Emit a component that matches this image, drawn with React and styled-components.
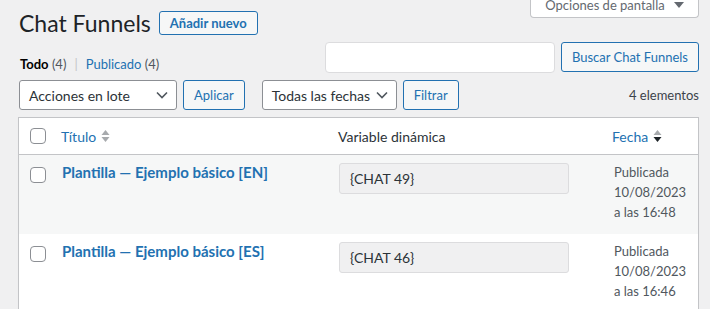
import React from "react"
import styled, { createGlobalStyle } from "styled-components"

const GlobalStyle = createGlobalStyle`
  html, body {
    margin: 0;
    padding: 0;
    background: #f0f0f1;
  }
  body {
    font-family: Lato, "Noto Sans", sans-serif;
    font-size: 13px;
    color: #3c434a;
  }
  * {
    box-sizing: border-box;
  }
`

const Wrap = styled.div`
  padding: 0 11px 0 19px;
  height: 309px;
  overflow: hidden;
`

const TopRow = styled.div`
  display: flex;
  justify-content: space-between;
  align-items: flex-start;
`

const Heading = styled.div`
  display: flex;
  align-items: center;
  gap: 8px;
  margin-top: 8px;
`

const Title = styled.h1`
  margin: 0;
  font-size: 23px;
  font-weight: 400;
  line-height: 30px;
  color: #1d2327;
`

const Button = styled.button`
  height: ${({ small }) => (small ? 24 : 30)}px;
  padding: 0 10px;
  border: 1px solid #2271b1;
  border-radius: 3px;
  background: #f6f7f7;
  color: #2271b1;
  font-family: inherit;
  font-size: 13px;
  font-weight: ${({ small }) => (small ? 700 : 400)};
  white-space: nowrap;
  cursor: pointer;
`

const ScreenOptions = styled.button`
  display: flex;
  align-items: center;
  justify-content: center;
  gap: 9px;
  margin-top: -8px;
  height: 26px;
  width: 169px;
  padding: 0 10px;
  border: 1px solid #c3c4c7;
  border-top: none;
  border-radius: 0 0 4px 4px;
  background: #fff;
  color: #646970;
  font-family: inherit;
  font-size: 13px;
  white-space: nowrap;
`

const FilterRow = styled.div`
  display: flex;
  justify-content: space-between;
  align-items: flex-end;
  margin-top: 4px;
`

const Views = styled.div`
  display: flex;
  align-items: center;
  gap: 6px;
  padding-left: 1px;
  margin-bottom: 1px;
  font-size: 13px;
  color: #50575e;
`

const Current = styled.span`
  color: #000;
  font-weight: 700;
`

const ViewLink = styled.span`
  color: #2271b1;
`

const Sep = styled.span`
  color: #c3c4c7;
  margin: 0 2px;
`

const SearchBox = styled.div`
  display: flex;
  gap: 6px;
`

const SearchInput = styled.input`
  width: 230px;
  height: 31px;
  border: 1px solid #dcdcde;
  border-radius: 4px;
  background: #fff;
`

const Tablenav = styled.div`
  display: flex;
  align-items: center;
  margin-top: 7px;
  height: 30px;
`

const SelectBox = styled.div`
  display: flex;
  align-items: center;
  justify-content: space-between;
  width: ${({ w }) => w}px;
  height: 30px;
  padding: 0 8px 0 9px;
  margin-right: 6px;
  margin-left: ${({ offset }) => offset || 0}px;
  border: 1px solid #8c8f94;
  border-radius: 3px;
  background: #fff;
  color: #2c3338;
  font-size: 14px;
  white-space: nowrap;
`

const Count = styled.div`
  margin-left: auto;
  font-size: 13px;
  color: #3c434a;
`

const Table = styled.div`
  margin-top: 7px;
  margin-left: -1px;
  border: 1px solid #c3c4c7;
  background: #fff;
  box-shadow: 0 1px 1px rgba(0, 0, 0, 0.04);
`

const Row = styled.div`
  display: grid;
  grid-template-columns: 32px 277px 274px 1fr;
  background: ${({ alt }) => (alt ? "#f6f7f7" : "#fff")};
  border-bottom: ${({ head }) => (head ? "1px solid #c3c4c7" : "none")};
  height: ${({ head }) => (head ? 37 : 79)}px;
`

const Cell = styled.div`
  display: flex;
  align-items: ${({ head }) => (head ? "center" : "flex-start")};
  padding: ${({ head }) => (head ? "0 10px" : "8px 10px")};
  font-size: 14px;
  color: #2c3338;
  white-space: nowrap;
`

const CheckCell = styled.div`
  display: flex;
  align-items: ${({ head }) => (head ? "center" : "flex-start")};
  padding: ${({ head }) => (head ? "0 0 0 11px" : "12px 0 0 11px")};
`

const Checkbox = styled.span`
  display: block;
  width: 16px;
  height: 16px;
  border: 1px solid #8c8f94;
  border-radius: 4px;
  background: #fff;
`

const SortLink = styled.span`
  display: flex;
  align-items: center;
  gap: 5px;
  color: #2271b1;
`

const RowTitle = styled.span`
  color: #2271b1;
  font-weight: 700;
  font-size: 15px;
  line-height: 18px;
  padding-left: 1px;
`

const ReadOnly = styled.div`
  width: 230px;
  height: 31px;
  display: flex;
  align-items: center;
  padding: 0 10px;
  margin-left: 1px;
  border: 1px solid #dcdcde;
  border-radius: 3px;
  background: #f0f0f1;
  color: #2c3338;
  font-size: 14px;
`

const DateText = styled.div`
  font-size: 13px;
  line-height: 20px;
  color: #50575e;
  margin-top: -1px;
  padding-left: 2px;
`

const Chevron = () => (
  <svg width="12" height="8" viewBox="0 0 12 8">
    <path d="M1 1.5l5 5 5-5" fill="none" stroke="#50575e" strokeWidth="1.6" />
  </svg>
)

const SortIcon = ({ down }) => (
  <svg width="9" height="14" viewBox="0 0 9 14">
    <path d="M4.5 1L8.5 6H0.5z" fill="#a7aaad" />
    <path d="M0.5 8H8.5L4.5 13z" fill={down ? "#1d2327" : "#a7aaad"} />
  </svg>
)

const rows = [
  { title: "Plantilla — Ejemplo básico [EN]", chat: "{CHAT 49}", time: "16:48" },
  { title: "Plantilla — Ejemplo básico [ES]", chat: "{CHAT 46}", time: "16:46" },
]

export default function App() {
  return (
    <>
      <GlobalStyle />
      <Wrap>
        <TopRow>
          <Heading>
            <Title>Chat Funnels</Title>
            <Button small>Añadir nuevo</Button>
          </Heading>
          <ScreenOptions>
            Opciones de pantalla
            <svg width="10" height="6" viewBox="0 0 10 6">
              <path d="M0 0H10L5 6z" fill="#646970" />
            </svg>
          </ScreenOptions>
        </TopRow>

        <FilterRow>
          <Views>
            <span>
              <Current>Todo</Current> (4)
            </span>
            <Sep>|</Sep>
            <span>
              <ViewLink>Publicado</ViewLink> (4)
            </span>
          </Views>
          <SearchBox>
            <SearchInput type="search" />
            <Button>Buscar Chat Funnels</Button>
          </SearchBox>
        </FilterRow>

        <Tablenav>
          <SelectBox w={158}>
            Acciones en lote
            <Chevron />
          </SelectBox>
          <Button>Aplicar</Button>
          <SelectBox w={135} offset={17}>
            Todas las fechas
            <Chevron />
          </SelectBox>
          <Button>Filtrar</Button>
          <Count>4 elementos</Count>
        </Tablenav>

        <Table>
          <Row head>
            <CheckCell head>
              <Checkbox />
            </CheckCell>
            <Cell head>
              <SortLink>
                Título <SortIcon />
              </SortLink>
            </Cell>
            <Cell head>Variable dinámica</Cell>
            <Cell head>
              <SortLink>
                Fecha <SortIcon down />
              </SortLink>
            </Cell>
          </Row>
          {rows.map((r, i) => (
            <Row key={r.chat} alt={i % 2 === 0}>
              <CheckCell>
                <Checkbox />
              </CheckCell>
              <Cell>
                <RowTitle>{r.title}</RowTitle>
              </Cell>
              <Cell>
                <ReadOnly>{r.chat}</ReadOnly>
              </Cell>
              <Cell>
                <DateText>
                  Publicada
                  <br />
                  10/08/2023
                  <br />a las {r.time}
                </DateText>
              </Cell>
            </Row>
          ))}
        </Table>
      </Wrap>
    </>
  )
}
